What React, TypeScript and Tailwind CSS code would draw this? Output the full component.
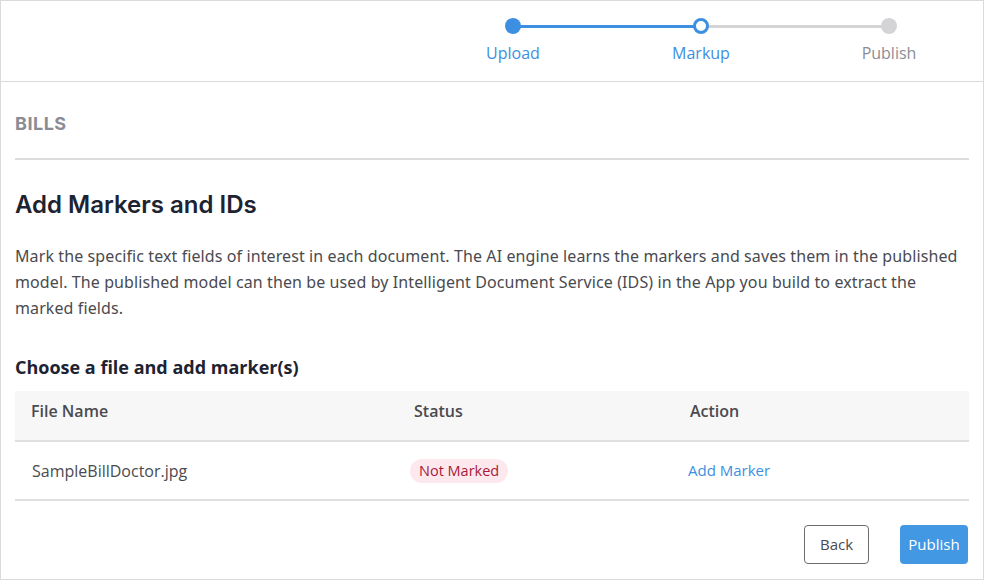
import React from "react";

const sans = { fontFamily: '"Open Sans", "Noto Sans", sans-serif' };

function Stepper() {
  const steps = [
    { label: "Upload", state: "done" },
    { label: "Markup", state: "current" },
    { label: "Publish", state: "todo" },
  ];
  return (
    <div className="ml-auto flex w-[564px]">
      {steps.map((s, i) => (
        <div key={s.label} className="relative flex w-[188px] flex-col items-center pt-[17px]">
          {i < steps.length - 1 && (
            <div
              className={
                "absolute left-[94px] top-[24px] h-[3px] w-[188px] " +
                (s.state === "done" ? "bg-[#3d8fe1]" : "bg-[#d4d4d6]")
              }
            />
          )}
          <div
            className={
              "relative z-10 h-[16px] w-[16px] rounded-full " +
              (s.state === "done"
                ? "bg-[#3d8fe1]"
                : s.state === "current"
                ? "border-[3px] border-[#3d8fe1] bg-white"
                : "bg-[#d4d4d6]")
            }
          />
          <div
            className={
              "mt-[7px] text-[16px] leading-[24px] " +
              (s.state === "todo" ? "text-[#8b8d94]" : "text-[#3d8fe1]")
            }
            style={sans}
          >
            {s.label}
          </div>
        </div>
      ))}
    </div>
  );
}

export default function App() {
  return (
    <div className="h-[580px] w-[984px] border border-[#dadada] bg-white">
      <div className="flex h-[81px] border-b border-[#dadada]">
        <Stepper />
      </div>
      <div className="px-[14px]">
        <div
          className="pt-[30px] pb-[22px] text-[18px] font-bold leading-[24px] tracking-[0.5px] text-[#8a8c94]"
          style={{ fontFamily: "Inter, sans-serif" }}
        >
          BILLS
        </div>
        <div className="h-[2px] bg-[#dcdcdc]" />
        <h1
          className="mt-[30px] text-[24px] font-semibold leading-[30px] text-[#1d2331]"
          style={{ fontFamily: "Inter, sans-serif" }}
        >
          Add Markers and IDs
        </h1>
        <p
          className="mt-[23px] text-[16px] leading-[26px] tracking-[0.1px] text-[#4a4a4f]"
          style={{ fontFamily: '"Noto Sans", sans-serif' }}
        >
          Mark the specific text fields of interest in each document. The AI engine learns the markers and saves them in the published model. The published model can then be used by Intelligent Document Service (IDS) in the App you build to extract the marked fields.
        </p>
        <h2
          className="mt-[33px] text-[18px] font-bold leading-[26px] text-[#1d2331]"
          style={sans}
        >
          Choose a file and add marker(s)
        </h2>
        <div className="mt-[11px]" style={sans}>
          <div className="grid h-[51px] grid-cols-[383px_276px_1fr] items-start border-b-2 border-[#e0e0e0] bg-[#f7f7f7] pt-[8px] text-[16px] font-semibold leading-[24px] text-[#4a4a4f]">
            <div className="pl-[16px]">File Name</div>
            <div className="pl-[16px]">Status</div>
            <div className="pl-[16px]">Action</div>
          </div>
          <div className="grid h-[59px] grid-cols-[383px_276px_1fr] items-center border-b-2 border-[#e0e0e0] text-[16px] text-[#4a4a4f]">
            <div className="pl-[17px]">SampleBillDoctor.jpg</div>
            <div className="pl-[12px]">
              <span className="inline-block rounded-full bg-[#fde9ed] px-[9px] py-[1px] text-[14.5px] leading-[22px] text-[#a8183a]">
                Not Marked
              </span>
            </div>
            <div className="pl-[14px] text-[15px] text-[#3d8fe1]">Add Marker</div>
          </div>
        </div>
        <div className="mt-[24px] flex justify-end gap-[31px] pr-[1px]" style={sans}>
          <button className="h-[39px] w-[65px] rounded-[4px] border border-[#6b6d73] bg-white text-[15px] text-[#4a4a4f]">
            Back
          </button>
          <button className="h-[39px] w-[68px] rounded-[4px] bg-[#4298e3] text-[15px] text-white">
            Publish
          </button>
        </div>
      </div>
    </div>
  );
}
